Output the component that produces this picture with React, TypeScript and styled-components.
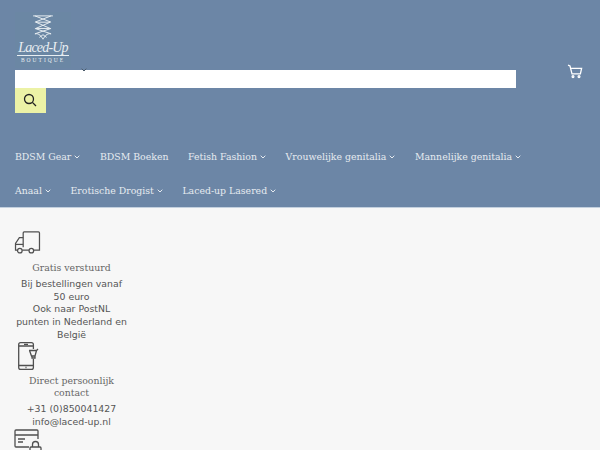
import React from "react";
import styled, { createGlobalStyle } from "styled-components";

const Global = createGlobalStyle`
  html, body { margin: 0; padding: 0; background: #f7f7f7; overflow: hidden; }
  body { width: 600px; height: 450px; font-family: "DejaVu Sans", sans-serif; }
`;

const Page = styled.div`
  width: 600px;
  height: 450px;
  overflow: hidden;
`;

const Header = styled.header`
  box-sizing: border-box;
  height: 208px;
  background: #6c86a6;
  border-bottom: 1px solid #c3d0de;
  padding: 12px 0 0 15px;
`;

const Top = styled.div`
  display: flex;
  align-items: flex-start;
`;

const SearchColumn = styled.div`
  width: 501px;
  display: flex;
  flex-direction: column;
`;

const LogoBox = styled.div`
  width: 56px;
  height: 56px;
  margin-bottom: 2px;
  display: flex;
  flex-direction: column;
  align-items: center;
  color: #e8eef2;
  background: #6b87a4;
`;

const LogoScript = styled.span`
  font-family: "Liberation Serif", serif;
  font-style: italic;
  font-size: 14px;
  line-height: 14px;
  letter-spacing: -0.8px;
  white-space: nowrap;
  border-bottom: 1px solid #e8eef2;
  padding: 0 1px;
`;

const LogoSub = styled.span`
  font-family: "Liberation Serif", serif;
  font-size: 5.5px;
  line-height: 8px;
  letter-spacing: 2px;
  white-space: nowrap;
`;

const SearchInput = styled.div`
  height: 18px;
  background: #fff;
  position: relative;
`;

const TinyChevron = styled.svg`
  position: absolute;
  left: 66px;
  top: -2px;
`;

const SearchButton = styled.button`
  width: 31px;
  height: 25px;
  padding: 0 1px 1px 0;
  border: 0;
  background: #ecf2a6;
  display: flex;
  align-items: center;
  justify-content: center;
`;

const CartLink = styled.div`
  margin: 52px 0 0 51px;
  width: 16px;
  height: 16px;
  color: #fff;
`;

const Nav = styled.nav`
  margin-top: 26px;
  display: flex;
  flex-wrap: wrap;
  width: 570px;
`;

const NavItem = styled.div`
  height: 34px;
  margin-right: 19.6px;
  display: flex;
  align-items: center;
  font-family: "DejaVu Serif", serif;
  font-size: 9.35px;
  color: #e6ebf0;
  white-space: nowrap;
`;

const Chevron = styled.svg`
  margin-left: 3px;
  margin-top: 2px;
`;

const Features = styled.section`
  width: 113px;
  margin-left: 15px;
  padding-top: 23px;
`;

const Feature = styled.div`
  display: flex;
  flex-direction: column;
  align-items: center;
  text-align: center;
`;

const FeatureIcon = styled.svg<{ $mb: number; $ml: number }>`
  align-self: flex-start;
  display: block;
  margin-left: ${(p) => p.$ml}px;
  margin-bottom: ${(p) => p.$mb}px;
  color: #505050;
`;

const FeatureTitle = styled.div`
  font-family: "DejaVu Serif", serif;
  font-size: 9.35px;
  line-height: 12.75px;
  margin-bottom: 3px;
  color: #666;
`;

const FeatureLine = styled.div`
  font-size: 9.35px;
  line-height: 12.75px;
  color: #555;
`;

const Caret = () => (
  <Chevron width="6" height="4" viewBox="0 0 6 4" fill="none" stroke="currentColor" strokeWidth="1">
    <path d="M0.7 0.7 L3 3 L5.3 0.7" />
  </Chevron>
);

const navItems: { label: string; caret: boolean }[] = [
  { label: "BDSM Gear", caret: true },
  { label: "BDSM Boeken", caret: false },
  { label: "Fetish Fashion", caret: true },
  { label: "Vrouwelijke genitalia", caret: true },
  { label: "Mannelijke genitalia", caret: true },
  { label: "Anaal", caret: true },
  { label: "Erotische Drogist", caret: true },
  { label: "Laced-up Lasered", caret: true },
];

const Logo = () => (
  <LogoBox>
    <svg width="24" height="26" viewBox="0 0 24 29" fill="none" stroke="currentColor" strokeWidth="1.1" style={{ marginTop: 3 }}>
      <path d="M1 1 H23 M3 1 L21 8 M21 1 L3 8 M4 8 H20 M4 8 L20 15 M20 8 L4 15 M4 15 H20 M3 15 L21 21 M21 15 L3 21" />
      <path d="M3 21 C8 20 10 24 12 27 C14 24 16 20 21 21 M8 25 L12 22 L16 25" />
    </svg>
    <LogoScript>Laced-Up</LogoScript>
    <LogoSub>BOUTIQUE</LogoSub>
  </LogoBox>
);

export default function App() {
  return (
    <Page>
      <Global />
      <Header>
        <Top>
          <SearchColumn>
            <Logo />
            <SearchInput>
              <TinyChevron width="6" height="4" viewBox="0 0 6 4" fill="none" stroke="#4a5a6a" strokeWidth="1">
                <path d="M0.7 0.7 L3 3 L5.3 0.7" />
              </TinyChevron>
            </SearchInput>
            <SearchButton aria-label="Zoeken">
              <svg width="14" height="14" viewBox="0 0 14 14" fill="none" stroke="#222" strokeWidth="1.3">
                <circle cx="6" cy="6" r="4.5" />
                <path d="M9.4 9.4 L13 13" />
              </svg>
            </SearchButton>
          </SearchColumn>
          <CartLink>
            <svg width="16" height="16" viewBox="0 0 16 16" fill="none" stroke="currentColor" strokeWidth="1.3">
              <path d="M1 1.2 L3 2 L5 9.8 H13.4 L14.6 4.4 H3.8" />
              <circle cx="6" cy="12.6" r="0.9" />
              <circle cx="12" cy="12.6" r="0.9" />
            </svg>
          </CartLink>
        </Top>
        <Nav>
          {navItems.map((item) => (
            <NavItem key={item.label}>
              {item.label}
              {item.caret && <Caret />}
            </NavItem>
          ))}
        </Nav>
      </Header>
      <Features>
        <Feature>
          <FeatureIcon $mb={8} $ml={-1} width="27" height="23" viewBox="0 0 27 24" fill="none" stroke="currentColor" strokeWidth="1.3">
            <path d="M9 17 V2 Q9 1 10 1 H25 Q26 1 26 2 V20 H20" />
            <path d="M9 7 H5 L1 13 V20 H3 M8 20 H15" />
            <path d="M1 14 H9" />
            <circle cx="5.5" cy="20.5" r="2.4" />
            <circle cx="17.5" cy="20.5" r="2.4" />
          </FeatureIcon>
          <FeatureTitle>Gratis verstuurd</FeatureTitle>
          <FeatureLine>Bij bestellingen vanaf 50 euro</FeatureLine>
          <FeatureLine>Ook naar PostNL punten in Nederland en België</FeatureLine>
        </Feature>
        <Feature>
          <FeatureIcon $mb={5} $ml={3} width="22" height="28" viewBox="0 0 22 28" fill="none" stroke="currentColor" strokeWidth="1.3">
            <path d="M15.4 7 V2.6 Q15.4 0.7 13.4 0.7 H2.6 Q0.7 0.7 0.7 2.6 V25.4 Q0.7 27.3 2.6 27.3 H13.4 Q15.4 27.3 15.4 25.4 V17" />
            <path d="M1 4 H15 M1 23.5 H15 M6 2.3 H10 M7.5 25.5 H8.5" />
            <path d="M11 8.5 H18.5 L20 7 M11.5 8.5 L13.5 14 H17 L18.5 8.5 M14 14 V16 H17 V14" />
          </FeatureIcon>
          <FeatureTitle>Direct persoonlijk contact</FeatureTitle>
          <FeatureLine>+31 (0)850041427</FeatureLine>
          <FeatureLine>info@laced-up.nl</FeatureLine>
        </Feature>
        <Feature>
          <FeatureIcon $mb={0} $ml={-1} width="28" height="24" viewBox="0 0 28 24" fill="none" stroke="currentColor" strokeWidth="1.3">
            <path d="M15 18 H2 Q1 18 1 17 V2 Q1 1 2 1 H23 Q24 1 24 2 V10" />
            <path d="M1 6 H24 M4 10 H11 M4 13 H9" />
            <rect x="16" y="18" width="11" height="8" rx="1" />
            <path d="M18.5 18 V15.5 A3 3 0 0 1 24.5 15.5 V18" />
          </FeatureIcon>
        </Feature>
      </Features>
    </Page>
  );
}
